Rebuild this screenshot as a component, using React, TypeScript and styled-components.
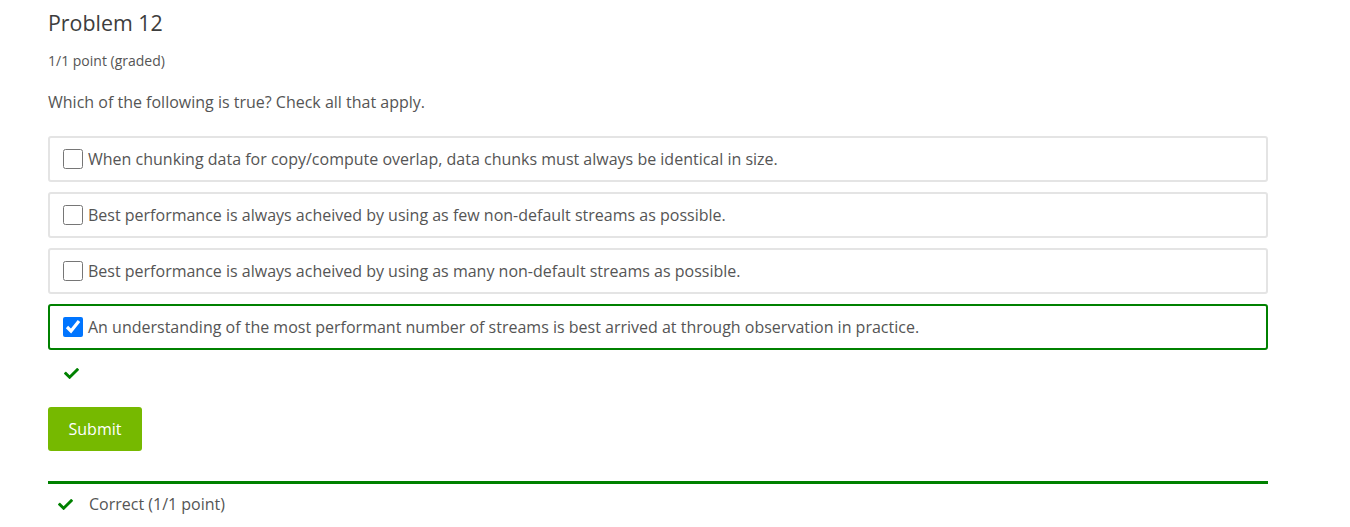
import React from "react";
import styled, { createGlobalStyle } from "styled-components";
import { FaCheck } from "react-icons/fa";

const Global = createGlobalStyle`
  html, body { margin: 0; padding: 0; background: #fff; }
  body { font-family: "Open Sans", "Liberation Sans", sans-serif; color: #555; }
`;

const Page = styled.div`
  width: 1220px;
  padding: 9px 0 0 48px;
  display: flex;
  flex-direction: column;
`;

const Title = styled.h3`
  margin: 0;
  font-size: 21.4px;
  font-weight: 400;
  line-height: 28px;
  color: #3d3d3d;
`;

const Points = styled.div`
  margin-top: 15px;
  font-size: 14px;
  line-height: 18px;
  color: #555;
`;

const Question = styled.p`
  margin: 20px 0 0;
  font-size: 16px;
  line-height: 24px;
  color: #555;
`;

const Choices = styled.div`
  margin-top: 22px;
  display: flex;
  flex-direction: column;
  gap: 10px;
`;

const Choice = styled.label<{ $correct?: boolean }>`
  display: flex;
  align-items: center;
  box-sizing: border-box;
  height: 46px;
  padding: 0 12px;
  border: 2px solid ${(p) => (p.$correct ? "#008100" : "#e4e4e4")};
  border-radius: 3px;
  font-size: 16px;
  color: #555;
`;

const Box = styled.input`
  width: 20px;
  height: 20px;
  margin: 0 5px 0 1px;
  flex: none;
`;

const Status = styled.div`
  height: 46px;
  padding-left: 16px;
  display: flex;
  align-items: center;
  color: #008100;
  font-size: 15px;
`;

const Submit = styled.button`
  align-self: flex-start;
  width: 94px;
  height: 44px;
  border: none;
  border-radius: 3px;
  background: #76b900;
  color: #fff;
  font-family: "Open Sans", "Liberation Sans", sans-serif;
  font-size: 16px;
  margin-top: 11px;
`;

const Divider = styled.hr`
  margin: 30px 0 0;
  border: none;
  height: 3px;
  background: #008100;
`;

const Feedback = styled.div`
  display: flex;
  align-items: center;
  gap: 16px;
  height: 40px;
  padding-left: 10px;
  font-size: 16px;
  color: #555;
`;

const FeedbackIcon = styled.span`
  color: #008100;
  display: flex;
  font-size: 15px;
`;

const options = [
  "When chunking data for copy/compute overlap, data chunks must always be identical in size.",
  "Best performance is always acheived by using as few non-default streams as possible.",
  "Best performance is always acheived by using as many non-default streams as possible.",
  "An understanding of the most performant number of streams is best arrived at through observation in practice.",
];

export default function App() {
  return (
    <>
      <Global />
      <Page>
        <Title>Problem 12</Title>
        <Points>1/1 point (graded)</Points>
        <Question>Which of the following is true? Check all that apply.</Question>
        <Choices>
          {options.map((o, i) => (
            <Choice key={i} $correct={i === 3}>
              <Box type="checkbox" defaultChecked={i === 3} />
              {o}
            </Choice>
          ))}
        </Choices>
        <Status>
          <FaCheck />
        </Status>
        <Submit>Submit</Submit>
        <Divider />
        <Feedback>
          <FeedbackIcon>
            <FaCheck />
          </FeedbackIcon>
          Correct (1/1 point)
        </Feedback>
      </Page>
    </>
  );
}
